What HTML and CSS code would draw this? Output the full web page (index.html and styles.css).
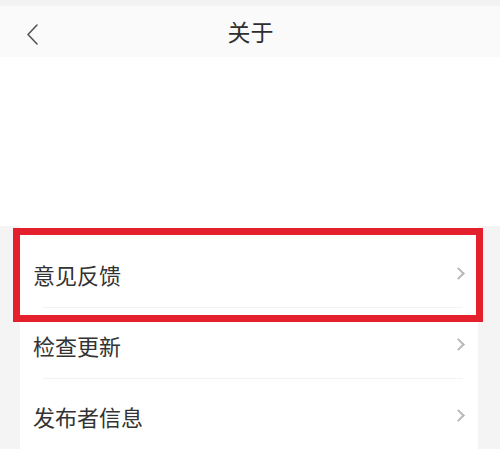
FILE: index.html
```html
<!DOCTYPE html>
<html lang="zh-CN">
<head>
    <meta charset="UTF-8">
    <meta name="viewport" content="width=device-width, initial-scale=1.0">
    <title>关于</title>
    <link rel="stylesheet" href="styles.css">
</head>
<body>
    <div class="status-strip"></div>

    <header class="nav-bar">
        <span class="back">
            <svg width="14" height="24" viewBox="0 0 14 24">
                <path d="M11 2 L2 11.5 L11 21" fill="none" stroke="#555" stroke-width="1.6" stroke-linecap="round" stroke-linejoin="round"/>
            </svg>
        </span>
        <h1 class="nav-title">关于</h1>
    </header>

    <div class="blank"></div>

    <main class="section">
        <ul class="menu">
            <li class="menu-item is-marked">
                <span>意见反馈</span>
                <span class="arrow"></span>
                <div class="highlight"></div>
            </li>
            <li class="menu-item">
                <span>检查更新</span>
                <span class="arrow"></span>
            </li>
            <li class="menu-item">
                <span>发布者信息</span>
                <span class="arrow"></span>
            </li>
        </ul>
    </main>
</body>
</html>
```

FILE: styles.css
```css
:root {
    --text-dark: #333333;
    --page-gray: #f4f4f4;
    --nav-bg: #fafafa;
    --line: #f3f3f3;
    --mark-red: #e3202b;
}

* {
    box-sizing: border-box;
}

body {
    margin: 0;
    background: #ffffff;
    color: var(--text-dark);
    font-family: "Noto Sans CJK SC", "Noto Sans", sans-serif;
    overflow: hidden;
}

.status-strip {
    height: 6px;
    background: #f2f2f2;
}

.nav-bar {
    height: 51px;
    background: var(--nav-bg);
    display: flex;
    align-items: center;
    justify-content: center;
    position: relative;
}

.back {
    position: absolute;
    left: 26px;
    top: 17px;
    display: flex;
}

.nav-title {
    margin: 0;
    font-size: 23px;
    font-weight: 400;
    line-height: 1;
    color: #2e2e2e;
    padding-left: 1px;
}

.blank {
    height: 169px;
}

.section {
    background: var(--page-gray);
    padding: 0 22px 0 20px;
}

.menu {
    list-style: none;
    margin: 0;
    padding: 12px 0 0;
    background: #ffffff;
}

.menu-item {
    height: 71px;
    display: flex;
    align-items: center;
    justify-content: space-between;
    padding: 0 15px 0 13px;
    font-size: 22px;
    position: relative;
}

.menu-item + .menu-item::before {
    content: '';
    position: absolute;
    top: -2px;
    left: 23px;
    right: 15px;
    height: 1px;
    background: var(--line);
}

.arrow {
    width: 9px;
    height: 9px;
    border-top: 2px solid #b8b8b8;
    border-right: 2px solid #b8b8b8;
    transform: rotate(45deg);
}

/* red marker box drawn over the first row */
.highlight {
    position: absolute;
    left: -7px;
    right: -5px;
    top: -10px;
    bottom: -13px;
    border: 7px solid var(--mark-red);
    pointer-events: none;
}
```
